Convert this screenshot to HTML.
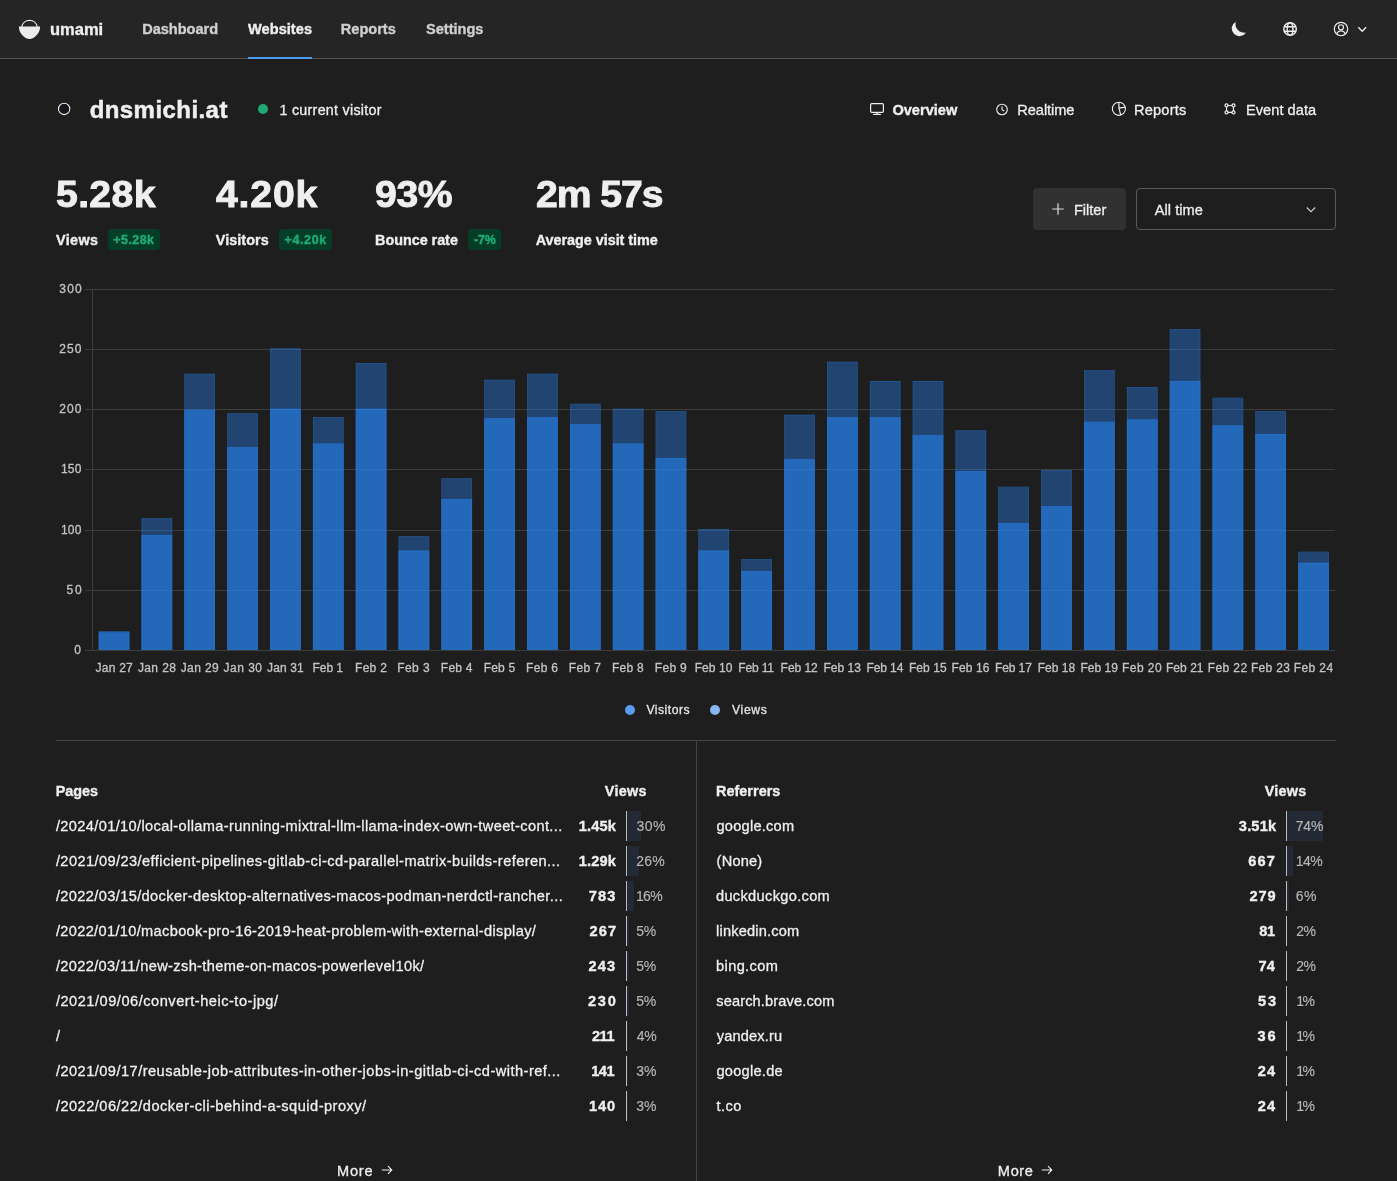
<!DOCTYPE html>
<html lang="en"><head><meta charset="utf-8"><title>dnsmichi.at | umami</title>
<style>
*{box-sizing:border-box;margin:0;padding:0}
html,body{width:1397px;height:1181px;overflow:hidden;background:#1e1e1e}
body{position:relative;font-family:"Liberation Sans",sans-serif;color:#efefef;font-size:14px;line-height:1;-webkit-text-stroke:0.3px currentColor}
#wrap{position:absolute;left:0;top:0;width:1397px;height:1181px;will-change:transform}
.a{position:absolute;white-space:nowrap}
.b{font-weight:700;-webkit-text-stroke:0.35px currentColor}
#hdr{position:absolute;left:0;top:0;width:1397px;height:59px;background:#252525;border-bottom:1px solid #505050}
.nav{font-size:14.6px;font-weight:700;-webkit-text-stroke:0.35px currentColor;color:#cfcfcf;letter-spacing:0.1px}
.tab{font-size:14.6px;color:#efefef}
.num{transform:scaleX(1.07);transform-origin:0 0;font-size:36.6px;font-weight:700;color:#efefef;-webkit-text-stroke:0.9px currentColor}
.lbl{font-size:14.4px;font-weight:700;-webkit-text-stroke:0.35px currentColor}
.chg{position:absolute;top:229px;height:21px;border-radius:4px;background:#053d28}
.chgt{color:#1fac74;font-size:12.4px;font-weight:700;-webkit-text-stroke:0.4px currentColor}
.ax{font-size:12px;color:#c4c4c4}
.row{font-size:14.6px;color:#efefef}
.val{font-weight:700;font-size:14.6px;-webkit-text-stroke:0.35px currentColor}
.pct{font-size:14px;color:#b6b6b6;-webkit-text-stroke-width:0.15px}
.pb{position:absolute;height:30px;border-left:1px solid #bcbcbc}
.pbf{position:absolute;left:0;top:0;height:30px;background:#232a35}
</style></head>
<body><div id="wrap">
<div id="hdr"></div>
<svg class="a" style="left:18px;top:18px" width="24" height="24" viewBox="0 0 24 24"><path d="M0.950 8.570V9.400C1.100 15 6.500 20.900 11.500 20.900C16.500 20.900 21.900 15 22.050 9.400V8.570Z" fill="#ececec"/><path d="M3.700 8.800A7.950 7.950 0 0 1 19.300 8.800" fill="none" stroke="#ececec" stroke-width="1.200"/></svg>
<div class="a" style="left:248px;top:57px;width:64px;height:2px;background:#4b9cf5"></div>

<svg class="a" style="left:1230px;top:20px" width="18" height="18" viewBox="0 0 18 18"><path d="M5.800 1.700A7.700 7.700 0 1 0 16.100 12.400A8.600 8.600 0 0 1 5.800 1.700Z" fill="#efefef"/></svg>
<svg class="a" style="left:1282px;top:21px" width="16" height="16" viewBox="0 0 16 16" fill="none" stroke="#efefef" stroke-width="1.450"><circle cx="8.050" cy="8" r="6.250"/><ellipse cx="8.050" cy="8" rx="2.900" ry="6.250"/><path d="M2.200 5.800h11.700M2.200 10.200h11.700"/></svg>
<svg class="a" style="left:1333px;top:21px" width="16" height="16" viewBox="0 0 16 16" fill="none" stroke="#efefef" stroke-width="1.150"><circle cx="8" cy="8" r="6.700"/><circle cx="8" cy="6.200" r="2.500"/><path d="M3.700 13c.700-2.100 2.300-3.200 4.300-3.200s3.600 1.100 4.300 3.200"/></svg>
<svg class="a" style="left:1356px;top:24px" width="12" height="12" viewBox="0 0 12 12" fill="none" stroke="#efefef" stroke-width="1.400"><path d="M2.300 3.300l3.900 3.900 3.900-3.900"/></svg>

<svg class="a" style="left:56px;top:101px" width="16" height="16" viewBox="0 0 16 16"><circle cx="8.150" cy="7.950" r="5.650" fill="#14171c" stroke="#efefef" stroke-width="1.100"/></svg>
<div class="a" style="left:258px;top:104px;width:10px;height:10px;border-radius:50%;background:#20a874"></div>

<svg class="a" style="left:869px;top:102px" width="16" height="16" viewBox="0 0 16 16" fill="none" stroke="#efefef" stroke-width="1.2"><rect x="1.6" y="1.6" width="12.8" height="8.8" rx="1.2"/><path d="M4.600 12.300h6.800" stroke-linecap="round"/><path d="M8 10.400v1.900"/></svg>
<svg class="a" style="left:994px;top:101px" width="16" height="16" viewBox="0 0 16 16" fill="none" stroke="#efefef" stroke-width="1.1"><circle cx="8" cy="8.500" r="5.300"/><path d="M8 5.300v3.400l2.200 1.300"/></svg>
<svg class="a" style="left:1110px;top:101px" width="18" height="18" viewBox="0 0 18 18" fill="none" stroke="#efefef" stroke-width="1.1"><circle cx="8.900" cy="7.850" r="6.550"/><path d="M8.900 1.300v5.900l6.300-1M8.900 7.200l1.900 6.900" stroke-width="1.2"/></svg>
<svg class="a" style="left:1222px;top:101px" width="16" height="16" viewBox="0 0 16 16" fill="none" stroke="#efefef" stroke-width="1.250"><circle cx="4.500" cy="4.450" r="1.500"/><circle cx="11.500" cy="4.450" r="1.500"/><circle cx="4.500" cy="11.450" r="1.500"/><circle cx="11.500" cy="11.450" r="1.500"/><path d="M6 4.500H10M6 11.400H10M4.550 5.950V9.950M11.450 5.950V9.950" stroke-width="1.150"/></svg>


<div class="chg" style="left:108px;width:52px"></div>
<div class="chg" style="left:279px;width:53px"></div>
<div class="chg" style="left:468px;width:33px"></div>
<div class="a" style="left:1033px;top:188px;width:93px;height:42px;border-radius:4px;background:#313131"></div>
<svg class="a" style="left:1051px;top:202px" width="14" height="14" viewBox="0 0 14 14" fill="none" stroke="#dcdcdc" stroke-width="1.2"><path d="M7 1.2v11.6M1.200 7h11.600"/></svg>
<div class="a" style="left:1136px;top:188px;width:200px;height:42px;border-radius:4px;border:1px solid #5a5a5a"></div>
<svg class="a" style="left:1305px;top:204px" width="12" height="12" viewBox="0 0 12 12" fill="none" stroke="#cfcfcf" stroke-width="1.1"><path d="M1.800 3.500l4.200 4.200 4.200-4.200"/></svg>
<svg class="a" style="left:0;top:270px" width="1397" height="420" viewBox="0 270 1397 420">
<path d="M85 289.5H1335M85 349.5H1335M85 409.5H1335M85 469.5H1335M85 530.5H1335M85 590.5H1335M85 650.5H1335M92.500 289V651" stroke="#3d3d3d" stroke-width="1" fill="none"/>
<path d="M98.74 650.00V631.25H129.34V650.00H128.84V631.75H99.24V650.00ZM141.58 650.00V518.13H172.18V650.00H171.68V518.63H142.08V650.00ZM184.42 650.00V373.73H215.02V650.00H214.52V374.23H184.92V650.00ZM227.26 650.00V413.44H257.86V650.00H257.36V413.94H227.76V650.00ZM270.10 650.00V348.46H300.70V650.00H300.20V348.96H270.60V650.00ZM312.94 650.00V417.05H343.54V650.00H343.04V417.55H313.44V650.00ZM355.78 650.00V362.90H386.38V650.00H385.88V363.40H356.28V650.00ZM398.62 650.00V536.18H429.22V650.00H428.72V536.68H399.12V650.00ZM441.46 650.00V478.42H472.06V650.00H471.56V478.92H441.96V650.00ZM484.30 650.00V379.75H514.90V650.00H514.40V380.25H484.80V650.00ZM527.14 650.00V373.73H557.74V650.00H557.24V374.23H527.64V650.00ZM569.98 650.00V403.82H600.58V650.00H600.08V404.32H570.48V650.00ZM612.82 650.00V408.63H643.42V650.00H642.92V409.13H613.32V650.00ZM655.66 650.00V411.04H686.26V650.00H685.76V411.54H656.16V650.00ZM698.50 650.00V528.96H729.10V650.00H728.60V529.46H699.00V650.00ZM741.34 650.00V559.05H771.94V650.00H771.44V559.55H741.84V650.00ZM784.18 650.00V414.65H814.78V650.00H814.28V415.15H784.68V650.00ZM827.02 650.00V361.70H857.62V650.00H857.12V362.20H827.52V650.00ZM869.86 650.00V380.95H900.46V650.00H899.96V381.45H870.36V650.00ZM912.70 650.00V380.95H943.30V650.00H942.80V381.45H913.20V650.00ZM955.54 650.00V430.29H986.14V650.00H985.64V430.79H956.04V650.00ZM998.38 650.00V486.85H1028.98V650.00H1028.48V487.35H998.88V650.00ZM1041.22 650.00V470.00H1071.82V650.00H1071.32V470.50H1041.72V650.00ZM1084.06 650.00V370.12H1114.66V650.00H1114.16V370.62H1084.56V650.00ZM1126.90 650.00V386.97H1157.50V650.00H1157.00V387.47H1127.40V650.00ZM1169.74 650.00V329.21H1200.34V650.00H1199.84V329.71H1170.24V650.00ZM1212.58 650.00V397.80H1243.18V650.00H1242.68V398.30H1213.08V650.00ZM1255.42 650.00V411.04H1286.02V650.00H1285.52V411.54H1255.92V650.00ZM1298.26 650.00V551.83H1328.86V650.00H1328.36V552.33H1298.76V650.00Z" fill="rgba(38,128,235,0.7)"/>
<path d="M99.09 650.00V631.60H128.99V650.00ZM141.93 650.00V518.48H171.83V650.00ZM184.77 650.00V374.08H214.67V650.00ZM227.61 650.00V413.79H257.51V650.00ZM270.45 650.00V348.81H300.35V650.00ZM313.29 650.00V417.40H343.19V650.00ZM356.13 650.00V363.25H386.03V650.00ZM398.97 650.00V536.53H428.87V650.00ZM441.81 650.00V478.77H471.71V650.00ZM484.65 650.00V380.10H514.55V650.00ZM527.49 650.00V374.08H557.39V650.00ZM570.33 650.00V404.17H600.23V650.00ZM613.17 650.00V408.98H643.07V650.00ZM656.01 650.00V411.39H685.91V650.00ZM698.85 650.00V529.31H728.75V650.00ZM741.69 650.00V559.40H771.59V650.00ZM784.53 650.00V415.00H814.43V650.00ZM827.37 650.00V362.05H857.27V650.00ZM870.21 650.00V381.30H900.11V650.00ZM913.05 650.00V381.30H942.95V650.00ZM955.89 650.00V430.64H985.79V650.00ZM998.73 650.00V487.20H1028.63V650.00ZM1041.57 650.00V470.35H1071.47V650.00ZM1084.41 650.00V370.47H1114.31V650.00ZM1127.25 650.00V387.32H1157.15V650.00ZM1170.09 650.00V329.56H1199.99V650.00ZM1212.93 650.00V398.15H1242.83V650.00ZM1255.77 650.00V411.39H1285.67V650.00ZM1298.61 650.00V552.18H1328.51V650.00Z" fill="rgba(38,128,235,0.4)"/>
<path d="M98.74 650.00V632.45H129.34V650.00H128.84V632.95H99.24V650.00ZM141.58 650.00V534.98H172.18V650.00H171.68V535.48H142.08V650.00ZM184.42 650.00V409.83H215.02V650.00H214.52V410.33H184.92V650.00ZM227.26 650.00V447.14H257.86V650.00H257.36V447.64H227.76V650.00ZM270.10 650.00V408.63H300.70V650.00H300.20V409.13H270.60V650.00ZM312.94 650.00V443.53H343.54V650.00H343.04V444.03H313.44V650.00ZM355.78 650.00V408.63H386.38V650.00H385.88V409.13H356.28V650.00ZM398.62 650.00V550.62H429.22V650.00H428.72V551.12H399.12V650.00ZM441.46 650.00V498.88H472.06V650.00H471.56V499.38H441.96V650.00ZM484.30 650.00V418.26H514.90V650.00H514.40V418.76H484.80V650.00ZM527.14 650.00V417.05H557.74V650.00H557.24V417.55H527.64V650.00ZM569.98 650.00V424.27H600.58V650.00H600.08V424.77H570.48V650.00ZM612.82 650.00V443.53H643.42V650.00H642.92V444.03H613.32V650.00ZM655.66 650.00V457.97H686.26V650.00H685.76V458.47H656.16V650.00ZM698.50 650.00V550.62H729.10V650.00H728.60V551.12H699.00V650.00ZM741.34 650.00V571.08H771.94V650.00H771.44V571.58H741.84V650.00ZM784.18 650.00V459.17H814.78V650.00H814.28V459.67H784.68V650.00ZM827.02 650.00V417.05H857.62V650.00H857.12V417.55H827.52V650.00ZM869.86 650.00V417.05H900.46V650.00H899.96V417.55H870.36V650.00ZM912.70 650.00V435.10H943.30V650.00H942.80V435.60H913.20V650.00ZM955.54 650.00V471.20H986.14V650.00H985.64V471.70H956.04V650.00ZM998.38 650.00V522.95H1028.98V650.00H1028.48V523.45H998.88V650.00ZM1041.22 650.00V506.10H1071.82V650.00H1071.32V506.60H1041.72V650.00ZM1084.06 650.00V421.87H1114.66V650.00H1114.16V422.37H1084.56V650.00ZM1126.90 650.00V419.46H1157.50V650.00H1157.00V419.96H1127.40V650.00ZM1169.74 650.00V380.95H1200.34V650.00H1199.84V381.45H1170.24V650.00ZM1212.58 650.00V425.48H1243.18V650.00H1242.68V425.98H1213.08V650.00ZM1255.42 650.00V433.90H1286.02V650.00H1285.52V434.40H1255.92V650.00ZM1298.26 650.00V562.66H1328.86V650.00H1328.36V563.16H1298.76V650.00Z" fill="rgba(38,128,235,0.9)"/>
<path d="M99.09 650.00V632.80H128.99V650.00ZM141.93 650.00V535.33H171.83V650.00ZM184.77 650.00V410.18H214.67V650.00ZM227.61 650.00V447.49H257.51V650.00ZM270.45 650.00V408.98H300.35V650.00ZM313.29 650.00V443.88H343.19V650.00ZM356.13 650.00V408.98H386.03V650.00ZM398.97 650.00V550.97H428.87V650.00ZM441.81 650.00V499.23H471.71V650.00ZM484.65 650.00V418.61H514.55V650.00ZM527.49 650.00V417.40H557.39V650.00ZM570.33 650.00V424.62H600.23V650.00ZM613.17 650.00V443.88H643.07V650.00ZM656.01 650.00V458.32H685.91V650.00ZM698.85 650.00V550.97H728.75V650.00ZM741.69 650.00V571.43H771.59V650.00ZM784.53 650.00V459.52H814.43V650.00ZM827.37 650.00V417.40H857.27V650.00ZM870.21 650.00V417.40H900.11V650.00ZM913.05 650.00V435.45H942.95V650.00ZM955.89 650.00V471.55H985.79V650.00ZM998.73 650.00V523.30H1028.63V650.00ZM1041.57 650.00V506.45H1071.47V650.00ZM1084.41 650.00V422.22H1114.31V650.00ZM1127.25 650.00V419.81H1157.15V650.00ZM1170.09 650.00V381.30H1199.99V650.00ZM1212.93 650.00V425.83H1242.83V650.00ZM1255.77 650.00V434.25H1285.67V650.00ZM1298.61 650.00V563.01H1328.51V650.00Z" fill="rgba(38,128,235,0.6)"/>
</svg>
<div class="a" style="left:625px;top:705px;width:10px;height:10px;border-radius:50%;background:#5a9af0"></div>
<div class="a" style="left:710px;top:705px;width:10px;height:10px;border-radius:50%;background:#86b4f4"></div>
<div class="a" style="left:56px;top:740px;width:1280px;height:1px;background:#464646"></div>
<div class="a" style="left:696px;top:740px;width:1px;height:441px;background:#444444"></div>
<div class="pb" style="left:626px;top:811px;width:50px"><div class="pbf" style="width:14.0px"></div></div>
<div class="pb" style="left:626px;top:846px;width:50px"><div class="pbf" style="width:12.0px"></div></div>
<div class="pb" style="left:626px;top:881px;width:50px"><div class="pbf" style="width:7.0px"></div></div>
<div class="pb" style="left:626px;top:916px;width:50px"><div class="pbf" style="width:1.5px"></div></div>
<div class="pb" style="left:626px;top:951px;width:50px"><div class="pbf" style="width:1.5px"></div></div>
<div class="pb" style="left:626px;top:986px;width:50px"><div class="pbf" style="width:1.5px"></div></div>
<div class="pb" style="left:626px;top:1021px;width:50px"><div class="pbf" style="width:1.0px"></div></div>
<div class="pb" style="left:626px;top:1056px;width:50px"><div class="pbf" style="width:0.5px"></div></div>
<div class="pb" style="left:626px;top:1091px;width:50px"><div class="pbf" style="width:0.5px"></div></div>
<div class="pb" style="left:1286px;top:811px;width:50px"><div class="pbf" style="width:36.0px"></div></div>
<div class="pb" style="left:1286px;top:846px;width:50px"><div class="pbf" style="width:6.0px"></div></div>
<div class="pb" style="left:1286px;top:881px;width:50px"><div class="pbf" style="width:2.0px"></div></div>
<div class="pb" style="left:1286px;top:916px;width:50px"><div class="pbf" style="width:0.0px"></div></div>
<div class="pb" style="left:1286px;top:951px;width:50px"><div class="pbf" style="width:0.0px"></div></div>
<div class="pb" style="left:1286px;top:986px;width:50px"><div class="pbf" style="width:0.0px"></div></div>
<div class="pb" style="left:1286px;top:1021px;width:50px"><div class="pbf" style="width:0.0px"></div></div>
<div class="pb" style="left:1286px;top:1056px;width:50px"><div class="pbf" style="width:0.0px"></div></div>
<div class="pb" style="left:1286px;top:1091px;width:50px"><div class="pbf" style="width:0.0px"></div></div>
<div class="a b" id="lg" style="left:49.95px;top:21px;letter-spacing:0.02px;font-size:16.5px;color:#efefef">umami</div>
<div class="a nav" id="nv1" style="left:142.16px;top:22px;letter-spacing:-0.04px;">Dashboard</div>
<div class="a nav" id="nv2" style="left:248.01px;top:22px;letter-spacing:0.03px;color:#efefef">Websites</div>
<div class="a nav" id="nv3" style="left:340.86px;top:22px;letter-spacing:-0.03px;">Reports</div>
<div class="a nav" id="nv4" style="left:426.04px;top:22px;letter-spacing:-0.03px;">Settings</div>
<div class="a b" id="ttl" style="left:89.64px;top:98px;letter-spacing:0.44px;font-size:24px;color:#efefef;-webkit-text-stroke-width:0.5px">dnsmichi.at</div>
<div class="a " id="cur" style="left:279.47px;top:103px;letter-spacing:0.27px;font-size:14.3px">1 current visitor</div>
<div class="a tab b" id="t1" style="left:892.42px;top:103px;letter-spacing:-0.01px;">Overview</div>
<div class="a tab" id="t2" style="left:1017.37px;top:103px;letter-spacing:-0.07px;">Realtime</div>
<div class="a tab" id="t3" style="left:1133.94px;top:103px;letter-spacing:0.20px;">Reports</div>
<div class="a tab" id="t4" style="left:1245.93px;top:103px;letter-spacing:0.05px;">Event data</div>
<div class="a num" id="n1" style="left:56.27px;top:177px;letter-spacing:0.34px;">5.28k</div>
<div class="a num" id="n2" style="left:216.14px;top:177px;letter-spacing:0.80px;">4.20k</div>
<div class="a num" id="n3" style="left:375.34px;top:177px;letter-spacing:-0.33px;">93%</div>
<div class="a num" id="n4" style="left:535.60px;top:177px;letter-spacing:-1.00px;">2m 57s</div>
<div class="a lbl" id="l1" style="left:56.00px;top:233px;letter-spacing:0.36px;">Views</div>
<div class="a lbl" id="l2" style="left:215.86px;top:233px;letter-spacing:0.04px;">Visitors</div>
<div class="a lbl" id="l3" style="left:375.02px;top:233px;letter-spacing:-0.03px;">Bounce rate</div>
<div class="a lbl" id="l4" style="left:535.72px;top:233px;letter-spacing:-0.03px;">Average visit time</div>
<div class="a chgt" id="c1" style="left:113.30px;top:234px;letter-spacing:0.48px;">+5.28k</div>
<div class="a chgt" id="c2" style="left:284.46px;top:234px;letter-spacing:0.70px;">+4.20k</div>
<div class="a chgt" id="c3" style="left:473.90px;top:234px;letter-spacing:-0.11px;">-7%</div>
<div class="a " id="flt" style="left:1073.89px;top:203px;letter-spacing:0.01px;font-size:14.6px">Filter</div>
<div class="a " id="allt" style="left:1154.63px;top:203px;letter-spacing:0.07px;font-size:14.6px">All time</div>
<div class="a ax" id="lg1" style="left:646.43px;top:704px;letter-spacing:0.48px;font-size:12.2px;color:#e4e4e4">Visitors</div>
<div class="a ax" id="lg2" style="left:732.12px;top:704px;letter-spacing:0.60px;font-size:12.2px;color:#e4e4e4">Views</div>
<div class="a b" id="ph" style="left:55.65px;top:784px;letter-spacing:-0.04px;font-size:14.4px">Pages</div>
<div class="a b" id="pv" style="left:604.86px;top:784px;letter-spacing:0.29px;font-size:14.4px">Views</div>
<div class="a b" id="rh" style="left:716.02px;top:784px;letter-spacing:0.04px;font-size:14.4px">Referrers</div>
<div class="a b" id="rv" style="left:1264.72px;top:784px;letter-spacing:0.24px;font-size:14.4px">Views</div>
<div class="a " id="m1" style="left:337.00px;top:1164px;letter-spacing:0.77px;font-size:14.6px">More</div>
<div class="a " id="m2" style="left:997.86px;top:1164px;letter-spacing:0.62px;font-size:14.6px">More</div>
<div class="a row" id="pr0" style="left:55.88px;top:819px;letter-spacing:0.37px;">/2024/01/10/local-ollama-running-mixtral-llm-llama-index-own-tweet-cont...</div>
<div class="a val" id="pv0" style="left:578.66px;top:819px;letter-spacing:0.20px;">1.45k</div>
<div class="a pct" id="pp0" style="left:636.62px;top:819px;letter-spacing:0.39px;">30%</div>
<div class="a row" id="pr1" style="left:55.88px;top:854px;letter-spacing:0.42px;">/2021/09/23/efficient-pipelines-gitlab-ci-cd-parallel-matrix-builds-referen...</div>
<div class="a val" id="pv1" style="left:578.66px;top:854px;letter-spacing:0.20px;">1.29k</div>
<div class="a pct" id="pp1" style="left:636.31px;top:854px;letter-spacing:0.22px;">26%</div>
<div class="a row" id="pr2" style="left:55.88px;top:889px;letter-spacing:0.38px;">/2022/03/15/docker-desktop-alternatives-macos-podman-nerdctl-rancher...</div>
<div class="a val" id="pv2" style="left:588.72px;top:889px;letter-spacing:1.12px;">783</div>
<div class="a pct" id="pp2" style="left:636.02px;top:889px;letter-spacing:-0.68px;">16%</div>
<div class="a row" id="pr3" style="left:55.88px;top:924px;letter-spacing:0.34px;">/2022/01/10/macbook-pro-16-2019-heat-problem-with-external-display/</div>
<div class="a val" id="pv3" style="left:589.57px;top:924px;letter-spacing:1.07px;">267</div>
<div class="a pct" id="pp3" style="left:636.21px;top:924px;letter-spacing:-0.27px;">5%</div>
<div class="a row" id="pr4" style="left:55.88px;top:959px;letter-spacing:0.36px;">/2022/03/11/new-zsh-theme-on-macos-powerlevel10k/</div>
<div class="a val" id="pv4" style="left:588.42px;top:959px;letter-spacing:1.24px;">243</div>
<div class="a pct" id="pp4" style="left:636.21px;top:959px;letter-spacing:-0.27px;">5%</div>
<div class="a row" id="pr5" style="left:55.88px;top:994px;letter-spacing:0.52px;">/2021/09/06/convert-heic-to-jpg/</div>
<div class="a val" id="pv5" style="left:588.01px;top:994px;letter-spacing:1.74px;">230</div>
<div class="a pct" id="pp5" style="left:636.21px;top:994px;letter-spacing:-0.27px;">5%</div>
<div class="a row" id="pr6" style="left:56.00px;top:1029px;">/</div>
<div class="a val" id="pv6" style="left:591.89px;top:1029px;letter-spacing:-0.45px;">211</div>
<div class="a pct" id="pp6" style="left:636.78px;top:1029px;letter-spacing:-0.25px;">4%</div>
<div class="a row" id="pr7" style="left:55.88px;top:1064px;letter-spacing:0.47px;">/2021/09/17/reusable-job-attributes-in-other-jobs-in-gitlab-ci-cd-with-ref...</div>
<div class="a val" id="pv7" style="left:591.18px;top:1064px;letter-spacing:-0.45px;">141</div>
<div class="a pct" id="pp7" style="left:636.35px;top:1064px;letter-spacing:-0.14px;">3%</div>
<div class="a row" id="pr8" style="left:55.88px;top:1099px;letter-spacing:0.48px;">/2022/06/22/docker-cli-behind-a-squid-proxy/</div>
<div class="a val" id="pv8" style="left:588.92px;top:1099px;letter-spacing:0.99px;">140</div>
<div class="a pct" id="pp8" style="left:636.35px;top:1099px;letter-spacing:-0.14px;">3%</div>
<div class="a row" id="rr0" style="left:716.45px;top:819px;letter-spacing:0.25px;">google.com</div>
<div class="a val" id="rv0" style="left:1238.87px;top:819px;letter-spacing:0.17px;">3.51k</div>
<div class="a pct" id="rp0" style="left:1295.76px;top:819px;letter-spacing:-0.21px;">74%</div>
<div class="a row" id="rr1" style="left:716.58px;top:854px;letter-spacing:0.20px;">(None)</div>
<div class="a val" id="rv1" style="left:1248.16px;top:854px;letter-spacing:1.20px;">667</div>
<div class="a pct" id="rp1" style="left:1295.80px;top:854px;letter-spacing:-0.60px;">14%</div>
<div class="a row" id="rr2" style="left:715.98px;top:889px;letter-spacing:0.33px;">duckduckgo.com</div>
<div class="a val" id="rv2" style="left:1249.41px;top:889px;letter-spacing:0.94px;">279</div>
<div class="a pct" id="rp2" style="left:1295.78px;top:889px;letter-spacing:0.54px;">6%</div>
<div class="a row" id="rr3" style="left:716.12px;top:924px;letter-spacing:0.18px;">linkedin.com</div>
<div class="a val" id="rv3" style="left:1259.22px;top:924px;letter-spacing:-0.45px;">81</div>
<div class="a pct" id="rp3" style="left:1296.20px;top:924px;letter-spacing:-0.53px;">2%</div>
<div class="a row" id="rr4" style="left:716.05px;top:959px;letter-spacing:0.37px;">bing.com</div>
<div class="a val" id="rv4" style="left:1258.59px;top:959px;letter-spacing:0.13px;">74</div>
<div class="a pct" id="rp4" style="left:1296.20px;top:959px;letter-spacing:-0.53px;">2%</div>
<div class="a row" id="rr5" style="left:716.22px;top:994px;letter-spacing:0.14px;">search.brave.com</div>
<div class="a val" id="rv5" style="left:1258.01px;top:994px;letter-spacing:1.98px;">53</div>
<div class="a pct" id="rp5" style="left:1296.33px;top:994px;letter-spacing:-1.60px;">1%</div>
<div class="a row" id="rr6" style="left:716.80px;top:1029px;letter-spacing:0.15px;">yandex.ru</div>
<div class="a val" id="rv6" style="left:1257.61px;top:1029px;letter-spacing:1.88px;">36</div>
<div class="a pct" id="rp6" style="left:1296.33px;top:1029px;letter-spacing:-1.60px;">1%</div>
<div class="a row" id="rr7" style="left:716.45px;top:1064px;letter-spacing:0.26px;">google.de</div>
<div class="a val" id="rv7" style="left:1257.65px;top:1064px;letter-spacing:1.36px;">24</div>
<div class="a pct" id="rp7" style="left:1296.33px;top:1064px;letter-spacing:-1.60px;">1%</div>
<div class="a row" id="rr8" style="left:716.55px;top:1099px;letter-spacing:0.46px;">t.co</div>
<div class="a val" id="rv8" style="left:1257.65px;top:1099px;letter-spacing:1.36px;">24</div>
<div class="a pct" id="rp8" style="left:1296.33px;top:1099px;letter-spacing:-1.60px;">1%</div>
<div class="a ax" id="x0" style="left:95.44px;top:662px;letter-spacing:0.26px;">Jan 27</div>
<div class="a ax" id="x1" style="left:137.94px;top:662px;letter-spacing:0.38px;">Jan 28</div>
<div class="a ax" id="x2" style="left:180.70px;top:662px;letter-spacing:0.41px;">Jan 29</div>
<div class="a ax" id="x3" style="left:223.44px;top:662px;letter-spacing:0.51px;">Jan 30</div>
<div class="a ax" id="x4" style="left:267.04px;top:662px;letter-spacing:0.11px;">Jan 31</div>
<div class="a ax" id="x5" style="left:312.61px;top:662px;letter-spacing:-0.10px;">Feb 1</div>
<div class="a ax" id="x6" style="left:355.03px;top:662px;letter-spacing:0.28px;">Feb 2</div>
<div class="a ax" id="x7" style="left:397.29px;top:662px;letter-spacing:0.41px;">Feb 3</div>
<div class="a ax" id="x8" style="left:440.86px;top:662px;letter-spacing:0.20px;">Feb 4</div>
<div class="a ax" id="x9" style="left:483.69px;top:662px;letter-spacing:0.21px;">Feb 5</div>
<div class="a ax" id="x10" style="left:526.03px;top:662px;letter-spacing:0.33px;">Feb 6</div>
<div class="a ax" id="x11" style="left:568.83px;top:662px;letter-spacing:0.38px;">Feb 7</div>
<div class="a ax" id="x12" style="left:611.88px;top:662px;letter-spacing:0.29px;">Feb 8</div>
<div class="a ax" id="x13" style="left:654.85px;top:662px;letter-spacing:0.29px;">Feb 9</div>
<div class="a ax" id="x14" style="left:694.70px;top:662px;letter-spacing:0.08px;">Feb 10</div>
<div class="a ax" id="x15" style="left:738.24px;top:662px;letter-spacing:-0.14px;">Feb 11</div>
<div class="a ax" id="x16" style="left:780.62px;top:662px;letter-spacing:-0.04px;">Feb 12</div>
<div class="a ax" id="x17" style="left:823.42px;top:662px;letter-spacing:0.01px;">Feb 13</div>
<div class="a ax" id="x18" style="left:866.40px;top:662px;letter-spacing:-0.08px;">Feb 14</div>
<div class="a ax" id="x19" style="left:908.94px;top:662px;letter-spacing:0.07px;">Feb 15</div>
<div class="a ax" id="x20" style="left:951.61px;top:662px;letter-spacing:0.08px;">Feb 16</div>
<div class="a ax" id="x21" style="left:995.03px;top:662px;letter-spacing:-0.11px;">Feb 17</div>
<div class="a ax" id="x22" style="left:1037.65px;top:662px;letter-spacing:0.02px;">Feb 18</div>
<div class="a ax" id="x23" style="left:1080.41px;top:662px;letter-spacing:0.05px;">Feb 19</div>
<div class="a ax" id="x24" style="left:1122.09px;top:662px;letter-spacing:0.44px;">Feb 20</div>
<div class="a ax" id="x25" style="left:1166.00px;top:662px;letter-spacing:0.03px;">Feb 21</div>
<div class="a ax" id="x26" style="left:1207.83px;top:662px;letter-spacing:0.38px;">Feb 22</div>
<div class="a ax" id="x27" style="left:1250.88px;top:662px;letter-spacing:0.36px;">Feb 23</div>
<div class="a ax" id="x28" style="left:1293.64px;top:662px;letter-spacing:0.43px;">Feb 24</div>
<div class="a ax" id="y0" style="left:74.27px;top:644px;">0</div>
<div class="a ax" id="y1" style="left:66.45px;top:584px;letter-spacing:1.89px;">50</div>
<div class="a ax" id="y2" style="left:60.96px;top:524px;letter-spacing:0.24px;">100</div>
<div class="a ax" id="y3" style="left:60.96px;top:463px;letter-spacing:0.24px;">150</div>
<div class="a ax" id="y4" style="left:59.34px;top:403px;letter-spacing:1.03px;">200</div>
<div class="a ax" id="y5" style="left:59.34px;top:343px;letter-spacing:1.03px;">250</div>
<div class="a ax" id="y6" style="left:59.30px;top:283px;letter-spacing:1.17px;">300</div>
<svg class="a" style="left:380px;top:1163px" width="14" height="14" viewBox="0 0 14 14" fill="none" stroke="#efefef" stroke-width="1.1"><path d="M1.800 7h10M8 3.200l3.800 3.800-3.800 3.800"/></svg>
<svg class="a" style="left:1040px;top:1163px" width="14" height="14" viewBox="0 0 14 14" fill="none" stroke="#efefef" stroke-width="1.1"><path d="M1.800 7h10M8 3.200l3.800 3.800-3.800 3.800"/></svg>

</div></body></html>
